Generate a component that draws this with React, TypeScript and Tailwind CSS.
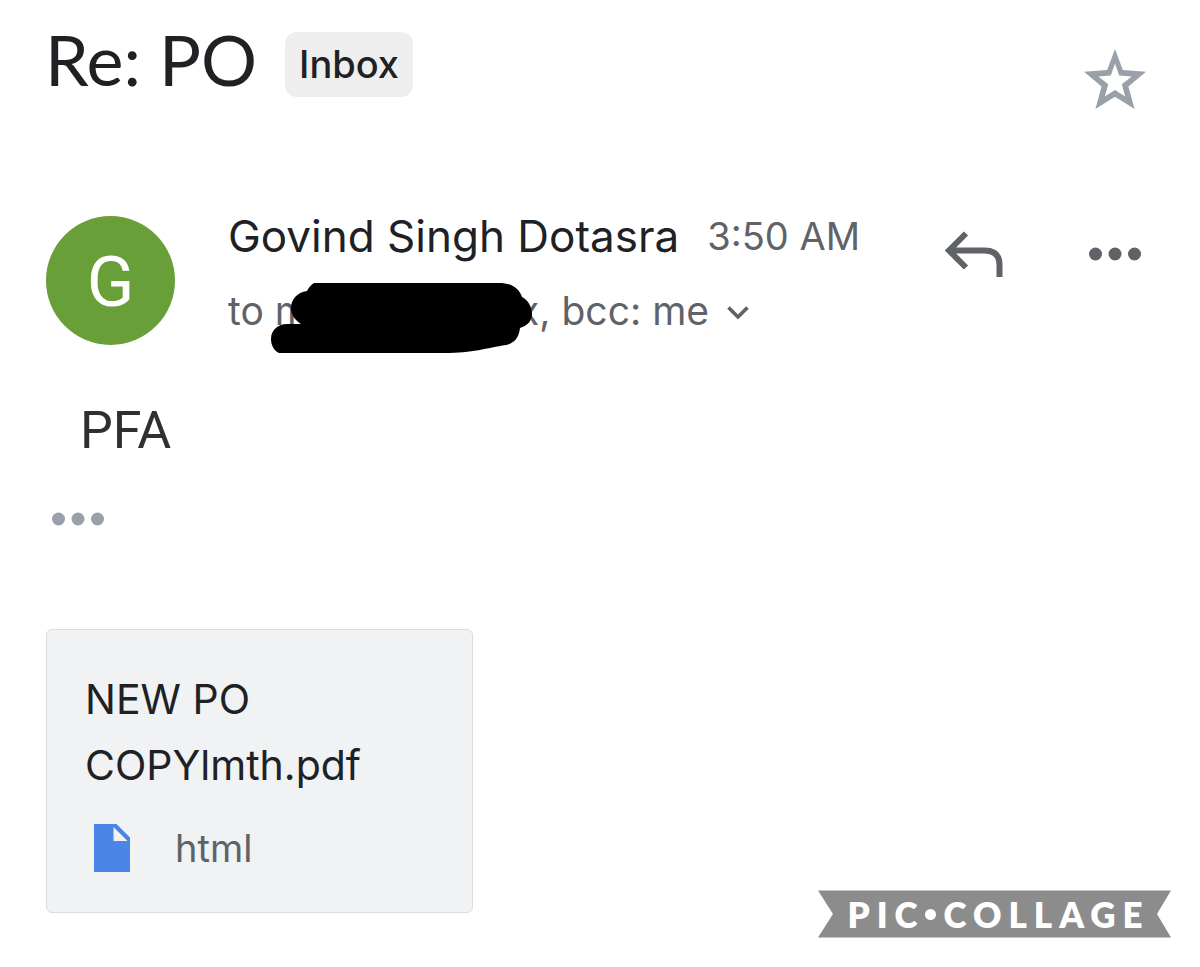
import React from 'react';

interface DotsProps {
  className?: string;
}

const Dots: React.FC<DotsProps> = ({ className }) => (
  <svg viewBox="0 0 52 14" className={`h-[14px] w-[52px] ${className ?? ''}`} fill="currentColor" aria-hidden="true">
    <circle cx="6.5" cy="7" r="6.5" />
    <circle cx="26" cy="7" r="6.5" />
    <circle cx="45.5" cy="7" r="6.5" />
  </svg>
);

const StarIcon = () => (
  <svg viewBox="0 0 62 60" className="h-[60px] w-[62px]" aria-hidden="true">
    <path
      fill="#9aa0a9"
      fillRule="evenodd"
      d="M31 0 38.8 21 62 22.8 44.4 37.4 50.6 60 31 47.8 11.4 60 17.6 37.4 0 22.8 23.2 21ZM31 14.5 26.8 26.6 14.3 27.4 24.2 35.3 20.8 47.5 31 41 41.2 47.5 37.8 35.3 47.7 27.4 35.2 26.6Z"
    />
  </svg>
);

const ReplyIcon = () => (
  <svg viewBox="0 0 58 46" className="h-[46px] w-[58px]" fill="none" stroke="currentColor" strokeWidth="6" aria-hidden="true">
    <path d="M21 2.5 4 19.5 21 36.5M4 19.5H40Q54.5 19.5 54.5 34V46" />
  </svg>
);

const FileIcon = () => (
  <svg viewBox="0 0 36 48" className="h-12 w-9" aria-hidden="true">
    <path fill="#4a86e8" fillRule="evenodd" d="M0 0H22.5L36 13.5V48H0ZM19.5 3V17H33.5Z" />
  </svg>
);

// Marker scribble that hides the recipient's address
const Redaction = () => (
  <svg viewBox="0 0 262 70" className="absolute -top-[3px] left-[43px] h-[70px] w-[262px]" aria-hidden="true">
    <path d="M43 0H228C240 0 248 5 251 14C257 17 261 24 261 31C261 38 256 43 249 45C248 54 244 60 235 62C216 65 201 70 174 70H8C3 68 0 62 0 56C0 48 6 41 16 41H30C24 37 20 32 20 25C20 16 27 9 36 8C38 4 40 2 43 0Z" />
  </svg>
);

const Watermark = () => (
  <div className="relative flex h-12 w-[353px] items-center justify-center self-end">
    <svg viewBox="0 0 353 48" className="absolute inset-0 h-full w-full" aria-hidden="true">
      <path fill="#8c8c8c" d="M0 .5H353L339 24 353 47.5H0L15 24Z" />
    </svg>
    <p className="relative flex items-center gap-1 pl-2 font-['Lato',sans-serif] text-[35px] leading-[48px] font-extrabold tracking-[0.2em] text-white">
      PIC
      <span className="-ml-1 size-[11px] rounded-full bg-white" />
      <span className="pl-1">COLLAGE</span>
    </p>
  </div>
);

export default function App() {
  return (
    <main className="bg-white pt-6 font-['Inter',sans-serif] text-[#202124]">
      {/* Subject */}
      <header className="flex items-start justify-between pr-[54px] pl-[45px]">
        <div className="flex items-start gap-7">
          <h1 className="font-['Lato',sans-serif] text-[70px] leading-[70px]">Re: PO</h1>
          <span className="mt-2 rounded-xl bg-[#eeeeee] px-[14px] text-[38px] leading-[65px] font-medium">Inbox</span>
        </div>
        <button type="button" aria-label="Star" className="mt-[25px]">
          <StarIcon />
        </button>
      </header>

      {/* Sender */}
      <section className="mt-[103px] flex items-start pr-[59px] pl-[46px]">
        <div className="mt-1 flex size-[129px] items-center justify-center rounded-full bg-[#689f38] pt-1 font-['Roboto',sans-serif] text-[70px] text-white">
          G
        </div>
        <div className="ml-[53px] flex-1">
          <div className="flex items-center gap-7 leading-[48px]">
            <h2 className="text-[44px]">Govind Singh Dotasra</h2>
            <time className="text-[38px] text-[#5f6368]">3:50 AM</time>
          </div>
          <div className="relative mt-[26px] flex items-center text-[39px] leading-[50px] text-[#5f6368]">
            <span className="w-[290px]">to m</span>
            <span>x, bcc: me</span>
            <button type="button" aria-label="Show details" className="mt-1 ml-[18px]">
              <svg viewBox="0 0 22 14" className="h-[14px] w-[22px]" fill="none" stroke="currentColor" strokeWidth="3.6" aria-hidden="true">
                <path d="M1.5 1.5 11 11 20.5 1.5" />
              </svg>
            </button>
            <Redaction />
          </div>
        </div>
        <div className="mt-[19px] flex items-center gap-[86px] text-[#5f6368]">
          <button type="button" aria-label="Reply">
            <ReplyIcon />
          </button>
          <button type="button" aria-label="More options">
            <Dots />
          </button>
        </div>
      </section>

      {/* Message */}
      <p className="mt-14 pl-20 font-['Roboto',sans-serif] text-[52px] leading-[60px] text-[#303030]">PFA</p>
      <button type="button" aria-label="Show trimmed content" className="mt-[51px] ml-[52px] block text-[#9aa0a9]">
        <Dots />
      </button>

      {/* Attachment */}
      <section className="mt-[103px] flex justify-between pr-[29px] pl-[46px]">
        <a href="#attachment" className="mb-[25px] block w-[427px] rounded-md border border-[#dadce0] bg-[#f0f2f4] px-[38px] pt-9 pb-10">
          <h3 className="text-[41px] leading-[66px]">
            NEW PO
            <br />
            COPYlmth.pdf
          </h3>
          <div className="mt-[26px] flex items-center gap-[45px] pl-[9px]">
            <FileIcon />
            <span className="text-[38px] leading-[48px] text-[#5f6368]">html</span>
          </div>
        </a>
        <Watermark />
      </section>
    </main>
  );
}
